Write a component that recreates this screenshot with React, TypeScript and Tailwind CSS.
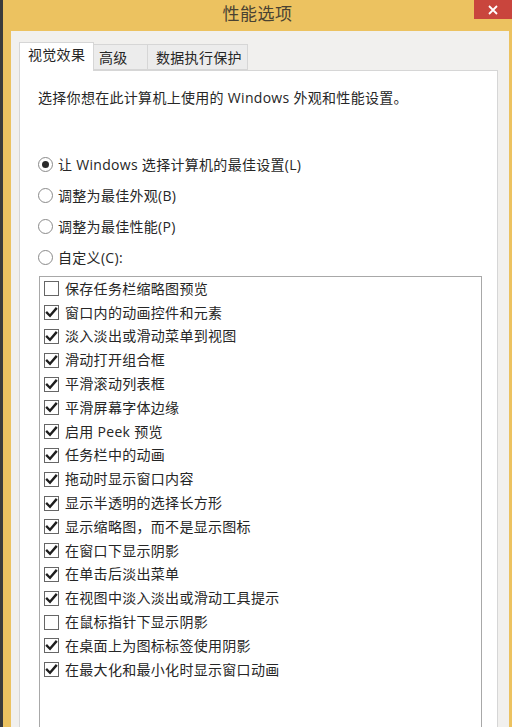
import React from "react";

const FONT = { fontFamily: '"Open Sans", "Noto Sans CJK SC", sans-serif' };

const items: [string, boolean][] = [
  ["保存任务栏缩略图预览", false],
  ["窗口内的动画控件和元素", true],
  ["淡入淡出或滑动菜单到视图", true],
  ["滑动打开组合框", true],
  ["平滑滚动列表框", true],
  ["平滑屏幕字体边缘", true],
  ["启用 Peek 预览", true],
  ["任务栏中的动画", true],
  ["拖动时显示窗口内容", true],
  ["显示半透明的选择长方形", true],
  ["显示缩略图，而不是显示图标", true],
  ["在窗口下显示阴影", true],
  ["在单击后淡出菜单", true],
  ["在视图中淡入淡出或滑动工具提示", true],
  ["在鼠标指针下显示阴影", false],
  ["在桌面上为图标标签使用阴影", true],
  ["在最大化和最小化时显示窗口动画", true],
];

const radios: [string, boolean][] = [
  ["让 Windows 选择计算机的最佳设置(L)", true],
  ["调整为最佳外观(B)", false],
  ["调整为最佳性能(P)", false],
  ["自定义(C):", false],
];

function Check({ on }: { on: boolean }) {
  return (
    <div className="w-[15px] h-[15px] border border-[#666666] bg-white flex items-center justify-center shrink-0">
      {on && (
        <svg width="13" height="13" viewBox="0 0 13 13">
          <path d="M2 6.8 L5 9.8 L11 2.8" fill="none" stroke="#1e1e1e" strokeWidth="2.4" strokeLinecap="square" />
        </svg>
      )}
    </div>
  );
}

function Radio({ on }: { on: boolean }) {
  return (
    <div className="w-[15px] h-[15px] rounded-full border border-[#8a8a8a] bg-white flex items-center justify-center shrink-0">
      {on && <div className="w-[7px] h-[7px] rounded-full bg-[#2a2a2a]" />}
    </div>
  );
}

export default function App() {
  return (
    <div className="w-[512px] h-[727px] flex bg-[#3b3b3b] overflow-hidden text-[#262626]" style={FONT}>
      <div className="w-[3px] shrink-0" />
      <div className="flex-1 flex flex-col bg-[#ecc260]">
        {/* title bar */}
        <div className="h-[31px] flex items-start shrink-0">
          <div className="w-[38px] shrink-0" />
          <div className="flex-1 text-center text-[17px] leading-[27px] text-[#4a4232] tracking-[0.5px]">性能选项</div>
          <div className="w-[38px] h-[19px] bg-[#c9453d] flex items-center justify-center shrink-0">
            <svg width="10" height="10" viewBox="0 0 10 10">
              <path d="M1 1 L9 9 M9 1 L1 9" stroke="#ffffff" strokeWidth="1.8" />
            </svg>
          </div>
        </div>
        {/* body */}
        <div className="flex-1 flex ml-[8px] mr-[3px]">
          <div className="flex-1 bg-[#f1f0ee] pl-[8px] pr-[11px] pt-[11px] flex flex-col">
            {/* tabs */}
            <div className="flex items-end h-[29px] relative z-10 text-[14px] tracking-[0.3px]">
              <div className="w-[75px] h-[29px] bg-white border border-b-0 border-[#d6d6d6] pl-[8px] leading-[24px]">视觉效果</div>
              <div className="w-[54px] h-[26px] bg-[#ececec] border border-l-0 border-[#d6d6d6] pl-[5px] leading-[26px] mb-[1px]">高级</div>
              <div className="w-[100px] h-[26px] bg-[#ececec] border border-l-0 border-[#d6d6d6] pl-[8px] leading-[26px] mb-[1px]">数据执行保护</div>
            </div>
            {/* panel */}
            <div className="flex-1 -mt-[1px] bg-white border border-[#d6d6d6] border-b-0 pl-[18px] pr-[15px] pt-[17px] text-[14px] tracking-[0.3px]">
              <div className="leading-[20px] whitespace-nowrap">选择你想在此计算机上使用的 Windows 外观和性能设置。</div>
              <div className="mt-[41px] flex flex-col">
                {radios.map(([t, on]) => (
                  <div key={t} className="h-[31px] flex items-center gap-[5px] whitespace-nowrap">
                    <Radio on={on} />
                    <span className="leading-[20px]">{t}</span>
                  </div>
                ))}
              </div>
              <div className="mt-[3px] ml-[1px] border border-[#a8a8a8] border-b-0 h-[460px] pl-[4px]">
                {items.map(([t, on]) => (
                  <div key={t} className="h-[23.8px] flex items-center gap-[6px] whitespace-nowrap">
                    <Check on={on} />
                    <span className="leading-[20px]">{t}</span>
                  </div>
                ))}
              </div>
            </div>
          </div>
        </div>
      </div>
    </div>
  );
}
